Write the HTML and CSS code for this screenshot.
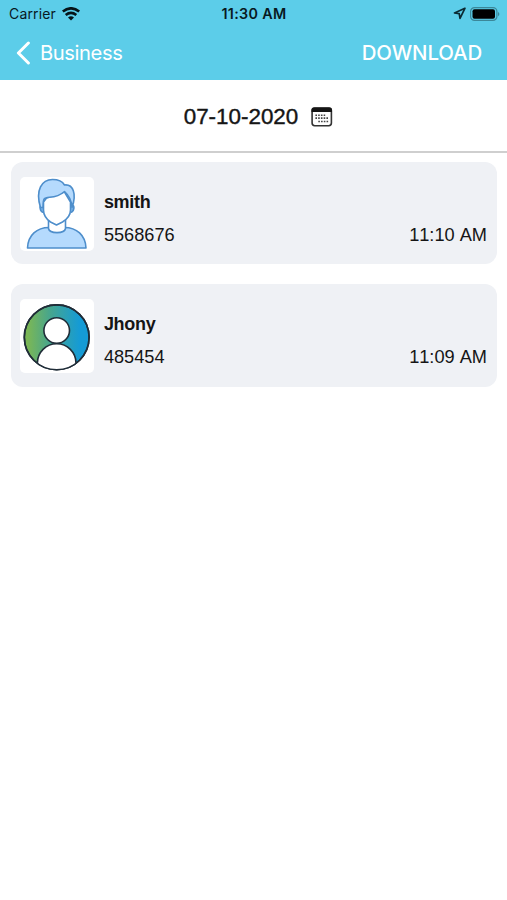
FILE: index.html
```html
<!DOCTYPE html>
<html lang="en">
<head>
<meta charset="utf-8">
<title>Business</title>
<link rel="stylesheet" href="styles.css">
</head>
<body>
<header class="header">
  <div class="status">
    <div class="status-left">
      <span class="carrier">Carrier</span>
      <svg class="wifi" width="18" height="14" viewBox="0 0 18 14" fill="none" stroke="#061419" stroke-width="2.6"><path d="M.8 4.600Q9-2 17.200 4.600M3.700 8Q9 3.700 14.300 8"/><path d="M6 10.400Q9 8 12 10.400L9 13.600Z" fill="#061419" stroke="none"/></svg>
    </div>
    <span class="clock">11:30 AM</span>
    <div class="status-right">
      <svg width="13" height="13" viewBox="0 0 13 13" fill="none" stroke="#0b2a33" stroke-width="1.7" stroke-linejoin="round"><path d="M11.900 1.300 1.500 6l4.700.7.8 4.600z"/></svg>
      <svg width="31" height="14" viewBox="0 0 31 14"><rect x=".6" y=".6" width="26.3" height="12.8" rx="4" fill="#5ccde9" stroke="#3b8799" stroke-width="1.2"/><rect x="2.5" y="2.2" width="22.5" height="9.600" rx="2" fill="#000"/><path d="M28 4.700q2.800 2.300 0 4.600z" fill="#3b8799"/></svg>
    </div>
  </div>
  <nav class="nav">
    <div class="back">
      <svg width="15" height="24" viewBox="0 0 15 24" fill="none" stroke="#fff" stroke-width="3" stroke-linecap="round" stroke-linejoin="round"><path d="M12.4 2 2.400 12l10 10"/></svg>
      <span class="back-label">Business</span>
    </div>
    <span class="download">DOWNLOAD</span>
  </nav>
</header>
<div class="datebar">
  <span class="date">07-10-2020</span>
  <svg width="22" height="20" viewBox="0 0 22 20"><rect x="1.1" y="1.1" width="19.3" height="17.6" rx="2.6" fill="#fff" stroke="#333" stroke-width="1.6"/><path d="M.5 5.1V3A2.6 2.6 0 0 1 3.100.4h15.300A2.600 2.600 0 0 1 21 3v2.100z" fill="#151515"/><path d="M4.400 8.200h9.800M4.400 11.100h13M7.300 14.500h10" stroke="#444" stroke-width="1.6" stroke-dasharray="1.6 1.15"/></svg>
</div>
<main class="list">
  <section class="card">
    <div class="avatar">
      <svg width="74" height="74" viewBox="0 0 74 74" stroke="#4e8ecb" stroke-width="1.6" stroke-linejoin="round">
        <path d="M7.500 71C8 58 17 50.500 29 50.500h15.500c12 0 21 7.500 21.500 20.500z" fill="#b5dafd"/>
        <path d="M28.500 43v8.500c1 5.500 16 5.500 17 0V43z" fill="#fff"/>
        <path d="M22.500 27.500c-4 1-2.500 7.500 1 8M51.500 27.500c4 1 2.500 7.500-1 8" fill="#7ab4e9"/>
        <path d="M23.500 25v8c0 6 3.500 9.500 7 12l6 3 6-3c4-2.500 8-6 8-12v-8l-6-10-18 6z" fill="#fff"/>
        <path d="M20.500 30.500C15 13 22 2.500 32.500 2.500c6 0 10 2 12 5.500 8.500-1 12.500 9 7.500 22.500-.3-7-3-12-7.500-16-5 4.500-10 5.500-15 5.800-5.500.3-6.500 1-6.500 10.200z" fill="#b5dafd"/>
      </svg>
    </div>
    <div class="info">
      <div class="name smith">smith</div>
      <div class="row"><span>5568676</span><span>11:10 AM</span></div>
    </div>
  </section>
  <section class="card">
    <div class="avatar">
      <svg width="74" height="74" viewBox="0 0 74 74" stroke="#202d38" stroke-width="1.6">
        <defs><linearGradient id="disc"><stop offset=".05" stop-color="#7bb755"/><stop offset=".38" stop-color="#49a68b"/><stop offset=".85" stop-color="#159bd5"/></linearGradient><clipPath id="round"><circle cx="36.700" cy="38.300" r="32.400"/></clipPath></defs>
        <circle cx="36.700" cy="38.300" r="32.400" fill="url(#disc)"/>
        <ellipse cx="36.700" cy="64" rx="19.300" ry="19.300" fill="#fff" clip-path="url(#round)"/>
        <circle cx="36.700" cy="31.500" r="12.800" fill="#fff"/>
        <circle cx="36.700" cy="38.300" r="32.400" fill="none"/>
      </svg>
    </div>
    <div class="info">
      <div class="name jhony">Jhony</div>
      <div class="row"><span>485454</span><span>11:09 AM</span></div>
    </div>
  </section>
</main>
</body>
</html>
```
FILE: styles.css
```css
* { box-sizing: border-box; }
body { margin: 0; min-height: 900px; background: #fff; color: #151515; font-family: "Liberation Sans", Arial, sans-serif; }
svg { display: block; flex: none; }
.header { height: 79.5px; background: #5ccde9; font-family: Inter, sans-serif; }
.status { display: grid; grid-template-columns: 1fr auto 1fr; align-items: center; height: 27px; padding: 0 6px 0 7px; color: #08191f; }
.status-left { display: flex; align-items: center; gap: 6px; padding-left: 2px; }
.carrier { width: 47px; font-size: 14px; letter-spacing: .15px; white-space: nowrap; }
.clock { font-size: 14.300px; font-weight: 600; letter-spacing: .35px; }
.status-right { display: flex; justify-content: flex-end; align-items: center; gap: 4px; }
.nav { display: flex; justify-content: space-between; align-items: center; height: 51px; padding: 0 25px 0 16px; color: #fff; }
.back { display: flex; align-items: center; gap: 9px; }
.back-label { font-size: 20.200px; letter-spacing: -.4px; }
.download { font-size: 20.400px; font-weight: 500; letter-spacing: -.1px; }
.datebar { display: flex; justify-content: center; align-items: center; gap: 13px; height: 73.5px; padding: 3px 0 0 10px; border-bottom: 2px solid #cfcfcf; }
.date { padding-top: 1px; font-size: 22.400px; line-height: 26px; -webkit-text-stroke: .4px #151515; }
.list { display: flex; flex-direction: column; gap: 20px; padding: 9px 10px 0 11px; }
.card { display: flex; gap: 10px; height: 102.300px; padding: 15px 10px 14px 9.400px; border-radius: 12px; background: #eff1f5; }
.avatar { flex: none; width: 73.500px; height: 73.500px; border-radius: 5px; background: #fff; overflow: hidden; }
.info { flex: 1; padding-top: 10px; font-size: 18.200px; line-height: 30px; font-kerning: none; }
.name { height: 33px; font-weight: 700; font-size: 18px; }
.smith { letter-spacing: -.3px; }
.jhony { letter-spacing: -.3px; }
.row { display: flex; justify-content: space-between; }
```
